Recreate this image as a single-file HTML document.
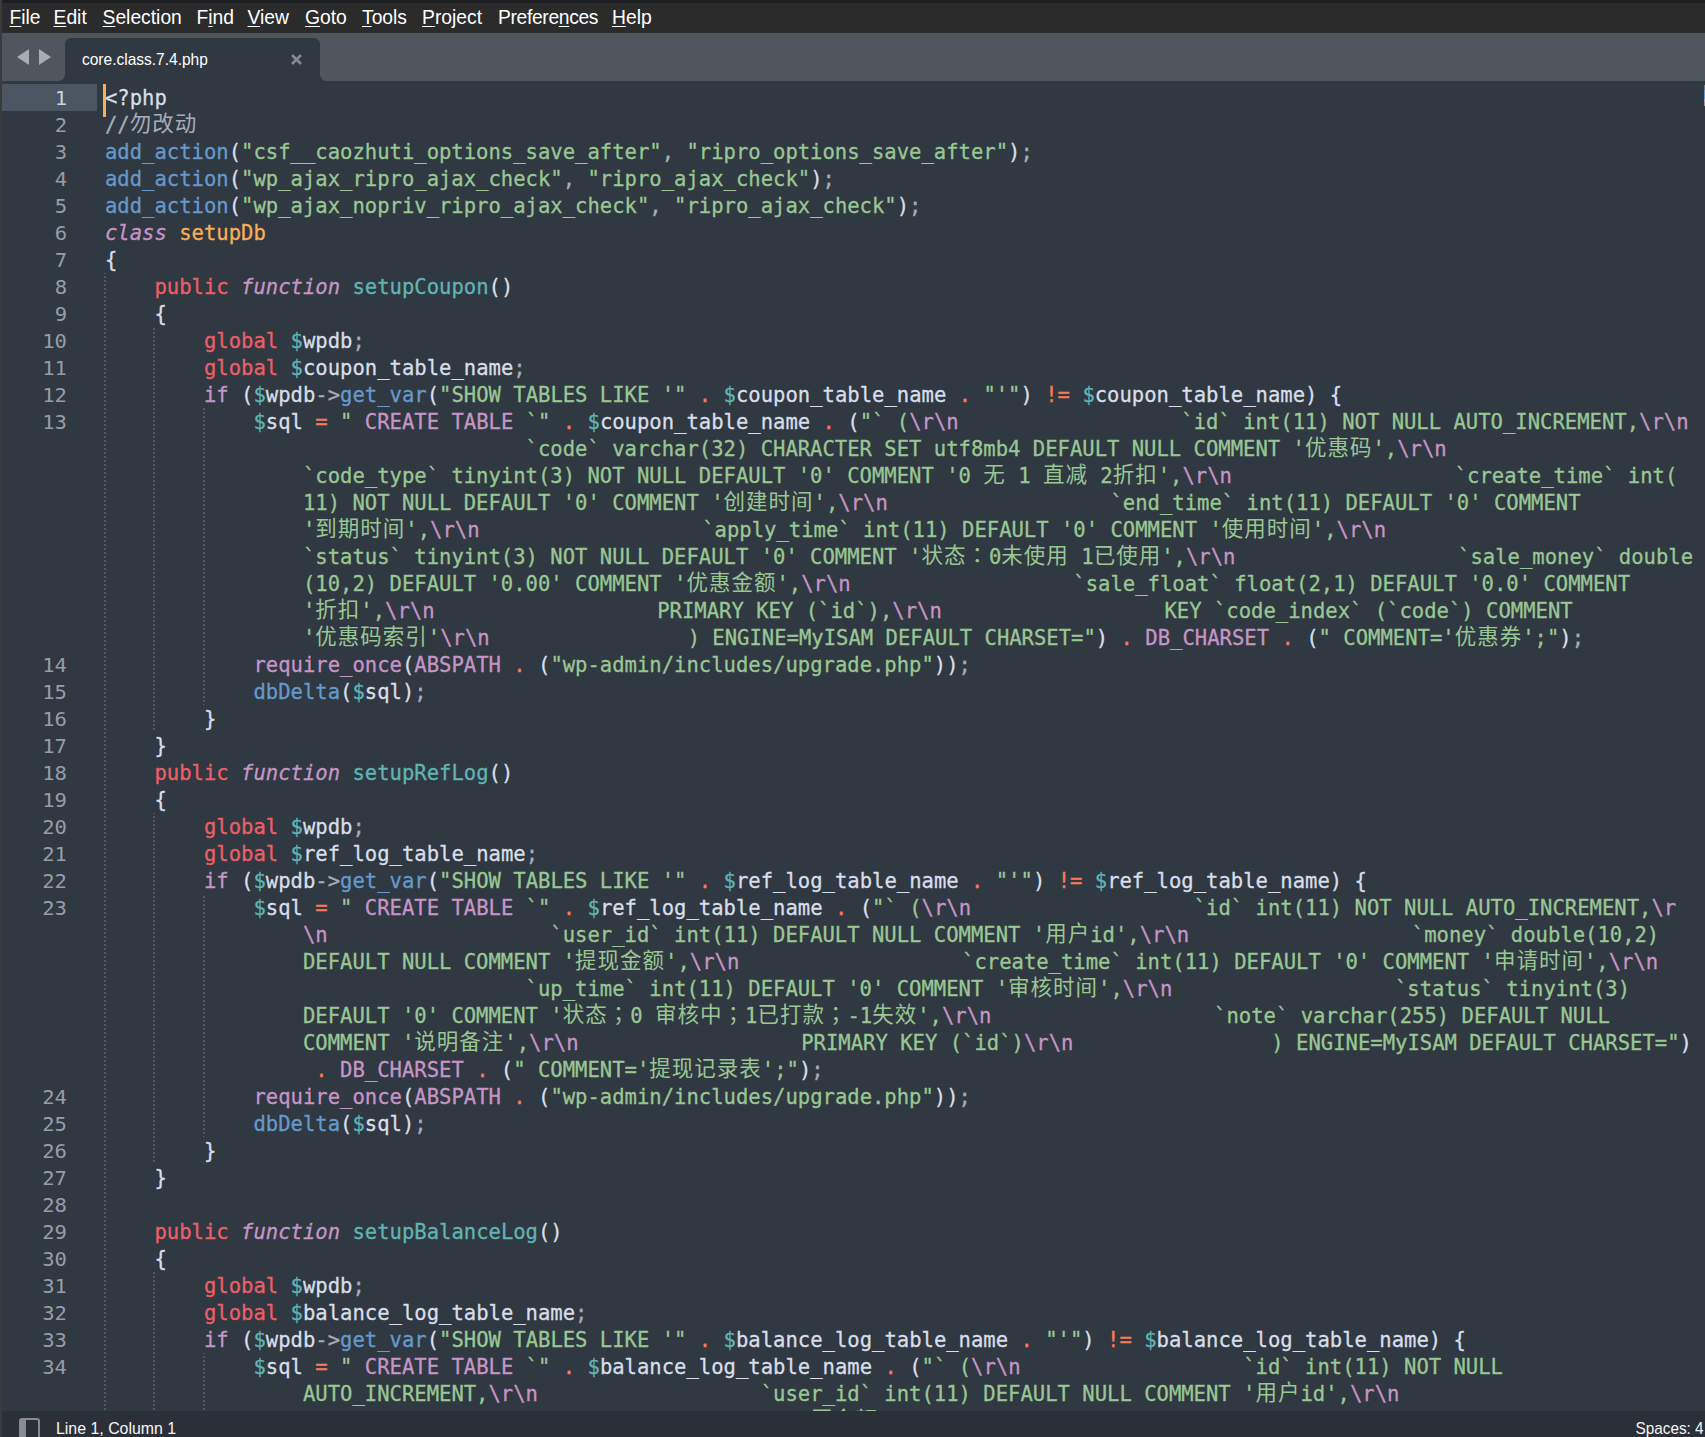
<!DOCTYPE html>
<html lang="zh"><head><meta charset="utf-8"><title>core.class.7.4.php - Sublime Text</title>
<style>
*{box-sizing:border-box}
html,body{margin:0;padding:0}
body{width:1705px;height:1437px;overflow:hidden;position:relative;background:#303841;font-family:"Liberation Sans",sans-serif}
#topstrip{position:absolute;left:0;top:0;width:1705px;height:3px;background:#1e1f23}
#menu{position:absolute;left:0;top:3px;width:1705px;height:30px;background:#2b2b2b;color:#fff;font-size:19.3px}
#menu span{position:absolute;top:3.5px;line-height:22px;white-space:nowrap}
#menu u{text-decoration:underline;text-underline-offset:1.5px;text-decoration-thickness:1px}
#tabs{position:absolute;left:0;top:33px;width:1705px;height:48px;background:#4f565e}
#tab{position:absolute;left:65px;top:4.5px;width:255px;height:43.5px;background:#303841;border-radius:6px 6px 0 0}
#tab:before,#tab:after{content:"";position:absolute;bottom:0;width:7px;height:7px}
#tab:before{left:-7px;background:radial-gradient(circle at 0 0,rgba(48,56,65,0) 6.5px,#303841 7.5px)}
#tab:after{right:-7px;background:radial-gradient(circle at 100% 0,rgba(48,56,65,0) 6.5px,#303841 7.5px)}
#tabname{position:absolute;left:16.5px;top:12px;font-size:17px;line-height:20px;color:#fff;white-space:nowrap;transform:scaleX(.912);transform-origin:0 0}
#tabx{position:absolute;left:226px;top:16px;width:11px;height:11px}
.arr{position:absolute;width:0;height:0;border-top:8px solid transparent;border-bottom:8px solid transparent}
#arl{left:17px;top:16px;border-right:12px solid #a9adb2}
#arr{left:38.5px;top:16px;border-left:12px solid #a9adb2}
#editor{position:absolute;left:0;top:81px;width:1705px;height:1330px;background:#303841;overflow:hidden}
#lefte{position:absolute;left:0;top:0;width:2px;height:1437px;background:#393b3d}
#gutterhl{position:absolute;left:2px;top:3px;width:95px;height:27px;background:#4b5662}
#caret{position:absolute;left:103px;top:3px;width:3px;height:33px;background:#f9ae58}
#gutter{position:absolute;left:0;top:4px;width:67px;color:#969dA9}
#gutter div{position:absolute;right:0;height:27px;line-height:27px;white-space:pre;transform:scaleY(.93);transform-origin:0 21px}
#gutter .cur{color:#cdd3de}
#code{position:absolute;left:105px;top:4px;color:#d8dee9}
#code,#gutter{font-family:"DejaVu Sans Mono","Liberation Mono","Noto Sans CJK SC",monospace;font-size:20.55px;letter-spacing:0.0px}
.ln{height:27px;line-height:27px;white-space:pre;-webkit-text-stroke:0.3px}
.z{font-style:normal;font-family:"Noto Sans CJK SC",sans-serif;font-size:21.5px;letter-spacing:1px;line-height:20px;-webkit-text-stroke:0;position:relative;top:-1px}
.zp{font-style:normal;font-family:"Noto Sans CJK TC","Noto Sans CJK JP","Noto Sans CJK SC",sans-serif}
.last span{color:transparent}.last .z{color:#99c794}
.ig{position:absolute;width:2px;background-image:linear-gradient(to bottom,#505862 0,#505862 2px,transparent 2px,transparent 4px);background-size:2px 4px;background-repeat:repeat-y}
#guides{position:absolute;left:0;top:3px}
.g{color:#99c794}.b{color:#6699cc}.t{color:#5fb4b4}.p{color:#c695c6}.pi{color:#c695c6;font-style:italic}
.r{color:#ec5f66}.o{color:#f97b58}.y{color:#f9ae58}.c{color:#a6acb9}
#status{position:absolute;left:0;top:1411px;width:1705px;height:26px;background:#2b3038;color:#f4f5f6;font-size:17px}
#status span{position:absolute;top:7.5px;line-height:20px;white-space:nowrap}
#sbicon{position:absolute;left:19px;top:7px;width:21px;height:24px;border:2px solid #888c91;border-radius:3px;background:linear-gradient(to right,#888c91 0,#888c91 5px,transparent 5px)}
#mini{position:absolute;left:1704px;top:4px;width:1px;height:21px;background:linear-gradient(to bottom,#777 0,#777 5px,#6699cc 5px,#6699cc 14px,#c695c6 14px,#c695c6 17px,#999 17px)}
</style></head><body>
<div id="topstrip"></div>
<div id="menu"><span style="left:9.5px"><u>F</u>ile</span><span style="left:53.5px"><u>E</u>dit</span><span style="left:102.5px"><u>S</u>election</span><span style="left:196.5px">F<u>i</u>nd</span><span style="left:247.5px"><u>V</u>iew</span><span style="left:305px"><u>G</u>oto</span><span style="left:362px"><u>T</u>ools</span><span style="left:422px"><u>P</u>roject</span><span style="left:498px"><b style="font-weight:normal;letter-spacing:-0.35px">Prefere<u>n</u>ces</b></span><span style="left:612px"><u>H</u>elp</span></div>
<div id="tabs"><div class="arr" id="arl"></div><div class="arr" id="arr"></div>
<div id="tab"><div id="tabname">core.class.7.4.php</div>
<svg id="tabx" viewBox="0 0 11 11"><path d="M1 1L10 10M10 1L1 10" stroke="#858a92" stroke-width="2.6" fill="none"/></svg></div></div>
<div id="editor">
<div id="gutterhl"></div>
<div id="guides"><div class="ig" style="left:104px;top:189px;height:1161px;background-position:0 3px"></div><div class="ig" style="left:153px;top:243px;height:405px;background-position:0 1px"></div><div class="ig" style="left:153px;top:729px;height:351px;background-position:0 3px"></div><div class="ig" style="left:153px;top:1188px;height:162px;background-position:0 0px"></div><div class="ig" style="left:203px;top:324px;height:297px;background-position:0 0px"></div><div class="ig" style="left:203px;top:810px;height:243px;background-position:0 2px"></div><div class="ig" style="left:203px;top:1269px;height:81px;background-position:0 3px"></div></div>
<div id="gutter"><div class="cur" style="top:0px">1</div><div style="top:27px">2</div><div style="top:54px">3</div><div style="top:81px">4</div><div style="top:108px">5</div><div style="top:135px">6</div><div style="top:162px">7</div><div style="top:189px">8</div><div style="top:216px">9</div><div style="top:243px">10</div><div style="top:270px">11</div><div style="top:297px">12</div><div style="top:324px">13</div><div style="top:567px">14</div><div style="top:594px">15</div><div style="top:621px">16</div><div style="top:648px">17</div><div style="top:675px">18</div><div style="top:702px">19</div><div style="top:729px">20</div><div style="top:756px">21</div><div style="top:783px">22</div><div style="top:810px">23</div><div style="top:999px">24</div><div style="top:1026px">25</div><div style="top:1053px">26</div><div style="top:1080px">27</div><div style="top:1107px">28</div><div style="top:1134px">29</div><div style="top:1161px">30</div><div style="top:1188px">31</div><div style="top:1215px">32</div><div style="top:1242px">33</div><div style="top:1269px">34</div></div>
<div id="code"><div class="ln">&lt;?php</div>
<div class="ln"><span class="c">//<i class="z">勿改动</i></span></div>
<div class="ln"><span class="b">add_action</span>(<span class="g">"csf__caozhuti_options_save_after"</span><span class="c">,</span> <span class="g">"ripro_options_save_after"</span>)<span class="c">;</span></div>
<div class="ln"><span class="b">add_action</span>(<span class="g">"wp_ajax_ripro_ajax_check"</span><span class="c">,</span> <span class="g">"ripro_ajax_check"</span>)<span class="c">;</span></div>
<div class="ln"><span class="b">add_action</span>(<span class="g">"wp_ajax_nopriv_ripro_ajax_check"</span><span class="c">,</span> <span class="g">"ripro_ajax_check"</span>)<span class="c">;</span></div>
<div class="ln"><span class="pi">class</span> <span class="y">setupDb</span></div>
<div class="ln">{</div>
<div class="ln">    <span class="r">public</span> <span class="pi">function</span> <span class="t">setupCoupon</span>()</div>
<div class="ln">    {</div>
<div class="ln">        <span class="r">global</span> <span class="t">$</span>wpdb<span class="c">;</span></div>
<div class="ln">        <span class="r">global</span> <span class="t">$</span>coupon_table_name<span class="c">;</span></div>
<div class="ln">        <span class="p">if</span> (<span class="t">$</span>wpdb<span class="c">-&gt;</span><span class="b">get_var</span>(<span class="g">"SHOW TABLES LIKE '"</span> <span class="o">.</span> <span class="t">$</span>coupon_table_name <span class="o">.</span> <span class="g">"'"</span>) <span class="o">!=</span> <span class="t">$</span>coupon_table_name) {</div>
<div class="ln">            <span class="t">$</span>sql <span class="o">=</span> <span class="g">"</span><span class="p"> CREATE TABLE </span><span class="g">`"</span> <span class="o">.</span> <span class="t">$</span>coupon_table_name <span class="o">.</span> (<span class="g">"</span><span class="g">` (</span><span class="p">\r</span><span class="p">\n</span><span class="g">                  `id` int(11) NOT NULL AUTO_INCREMENT,</span><span class="p">\r</span><span class="p">\n</span></div>
<div class="ln">                <span class="g">                  `code` varchar(32) CHARACTER SET utf8mb4 DEFAULT NULL COMMENT '<i class="z">优惠码</i>',</span><span class="p">\r</span><span class="p">\n</span></div>
<div class="ln">                <span class="g">`code_type` tinyint(3) NOT NULL DEFAULT '0' COMMENT '0 <i class="z">无</i> 1 <i class="z">直减</i> 2<i class="z">折扣</i>',</span><span class="p">\r</span><span class="p">\n</span><span class="g">                  `create_time` int(</span></div>
<div class="ln">                <span class="g">11) NOT NULL DEFAULT '0' COMMENT '<i class="z">创建时间</i>',</span><span class="p">\r</span><span class="p">\n</span><span class="g">                  `end_time` int(11) DEFAULT '0' COMMENT</span></div>
<div class="ln">                <span class="g">'<i class="z">到期时间</i>',</span><span class="p">\r</span><span class="p">\n</span><span class="g">                  `apply_time` int(11) DEFAULT '0' COMMENT '<i class="z">使用时间</i>',</span><span class="p">\r</span><span class="p">\n</span></div>
<div class="ln">                <span class="g">`status` tinyint(3) NOT NULL DEFAULT '0' COMMENT '<i class="z">状态<i class="zp" lang="zh-TW">：</i></i>0<i class="z">未使用</i> 1<i class="z">已使用</i>',</span><span class="p">\r</span><span class="p">\n</span><span class="g">                  `sale_money` double</span></div>
<div class="ln">                <span class="g">(10,2) DEFAULT '0.00' COMMENT '<i class="z">优惠金额</i>',</span><span class="p">\r</span><span class="p">\n</span><span class="g">                  `sale_float` float(2,1) DEFAULT '0.0' COMMENT</span></div>
<div class="ln">                <span class="g">'<i class="z">折扣</i>',</span><span class="p">\r</span><span class="p">\n</span><span class="g">                  PRIMARY KEY (`id`),</span><span class="p">\r</span><span class="p">\n</span><span class="g">                  KEY `code_index` (`code`) COMMENT</span></div>
<div class="ln">                <span class="g">'<i class="z">优惠码索引</i>'</span><span class="p">\r</span><span class="p">\n</span><span class="g">                ) ENGINE=MyISAM DEFAULT CHARSET="</span>) <span class="o">.</span> <span class="p">DB_CHARSET</span> <span class="o">.</span> (<span class="g">" COMMENT='<i class="z">优惠券</i>';"</span>)<span class="c">;</span></div>
<div class="ln">            <span class="p">require_once</span>(<span class="p">ABSPATH</span> <span class="o">.</span> (<span class="g">"wp-admin/includes/upgrade.php"</span>))<span class="c">;</span></div>
<div class="ln">            <span class="b">dbDelta</span>(<span class="t">$</span>sql)<span class="c">;</span></div>
<div class="ln">        }</div>
<div class="ln">    }</div>
<div class="ln">    <span class="r">public</span> <span class="pi">function</span> <span class="t">setupRefLog</span>()</div>
<div class="ln">    {</div>
<div class="ln">        <span class="r">global</span> <span class="t">$</span>wpdb<span class="c">;</span></div>
<div class="ln">        <span class="r">global</span> <span class="t">$</span>ref_log_table_name<span class="c">;</span></div>
<div class="ln">        <span class="p">if</span> (<span class="t">$</span>wpdb<span class="c">-&gt;</span><span class="b">get_var</span>(<span class="g">"SHOW TABLES LIKE '"</span> <span class="o">.</span> <span class="t">$</span>ref_log_table_name <span class="o">.</span> <span class="g">"'"</span>) <span class="o">!=</span> <span class="t">$</span>ref_log_table_name) {</div>
<div class="ln">            <span class="t">$</span>sql <span class="o">=</span> <span class="g">"</span><span class="p"> CREATE TABLE </span><span class="g">`"</span> <span class="o">.</span> <span class="t">$</span>ref_log_table_name <span class="o">.</span> (<span class="g">"</span><span class="g">` (</span><span class="p">\r</span><span class="p">\n</span><span class="g">                  `id` int(11) NOT NULL AUTO_INCREMENT,</span><span class="p">\r</span></div>
<div class="ln">                <span class="p">\n</span><span class="g">                  `user_id` int(11) DEFAULT NULL COMMENT '<i class="z">用户</i>id',</span><span class="p">\r</span><span class="p">\n</span><span class="g">                  `money` double(10,2)</span></div>
<div class="ln">                <span class="g">DEFAULT NULL COMMENT '<i class="z">提现金额</i>',</span><span class="p">\r</span><span class="p">\n</span><span class="g">                  `create_time` int(11) DEFAULT '0' COMMENT '<i class="z">申请时间</i>',</span><span class="p">\r</span><span class="p">\n</span></div>
<div class="ln">                <span class="g">                  `up_time` int(11) DEFAULT '0' COMMENT '<i class="z">审核时间</i>',</span><span class="p">\r</span><span class="p">\n</span><span class="g">                  `status` tinyint(3)</span></div>
<div class="ln">                <span class="g">DEFAULT '0' COMMENT '<i class="z">状态<i class="zp" lang="zh-TW">；</i></i>0 <i class="z">审核中<i class="zp" lang="zh-TW">；</i></i>1<i class="z">已打款<i class="zp" lang="zh-TW">；</i></i>-1<i class="z">失效</i>',</span><span class="p">\r</span><span class="p">\n</span><span class="g">                  `note` varchar(255) DEFAULT NULL</span></div>
<div class="ln">                <span class="g">COMMENT '<i class="z">说明备注</i>',</span><span class="p">\r</span><span class="p">\n</span><span class="g">                  PRIMARY KEY (`id`)</span><span class="p">\r</span><span class="p">\n</span><span class="g">                ) ENGINE=MyISAM DEFAULT CHARSET="</span>)</div>
<div class="ln">                 <span class="o">.</span> <span class="p">DB_CHARSET</span> <span class="o">.</span> (<span class="g">" COMMENT='<i class="z">提现记录表</i>';"</span>)<span class="c">;</span></div>
<div class="ln">            <span class="p">require_once</span>(<span class="p">ABSPATH</span> <span class="o">.</span> (<span class="g">"wp-admin/includes/upgrade.php"</span>))<span class="c">;</span></div>
<div class="ln">            <span class="b">dbDelta</span>(<span class="t">$</span>sql)<span class="c">;</span></div>
<div class="ln">        }</div>
<div class="ln">    }</div>
<div class="ln"></div>
<div class="ln">    <span class="r">public</span> <span class="pi">function</span> <span class="t">setupBalanceLog</span>()</div>
<div class="ln">    {</div>
<div class="ln">        <span class="r">global</span> <span class="t">$</span>wpdb<span class="c">;</span></div>
<div class="ln">        <span class="r">global</span> <span class="t">$</span>balance_log_table_name<span class="c">;</span></div>
<div class="ln">        <span class="p">if</span> (<span class="t">$</span>wpdb<span class="c">-&gt;</span><span class="b">get_var</span>(<span class="g">"SHOW TABLES LIKE '"</span> <span class="o">.</span> <span class="t">$</span>balance_log_table_name <span class="o">.</span> <span class="g">"'"</span>) <span class="o">!=</span> <span class="t">$</span>balance_log_table_name) {</div>
<div class="ln">            <span class="t">$</span>sql <span class="o">=</span> <span class="g">"</span><span class="p"> CREATE TABLE </span><span class="g">`"</span> <span class="o">.</span> <span class="t">$</span>balance_log_table_name <span class="o">.</span> (<span class="g">"</span><span class="g">` (</span><span class="p">\r</span><span class="p">\n</span><span class="g">                  `id` int(11) NOT NULL</span></div>
<div class="ln">                <span class="g">AUTO_INCREMENT,</span><span class="p">\r</span><span class="p">\n</span><span class="g">                  `user_id` int(11) DEFAULT NULL COMMENT '<i class="z">用户</i>id',</span><span class="p">\r</span><span class="p">\n</span></div>
<div class="ln last">                <span class="g">`old` double(10,2) DEFAULT NULL COMMENT '<i class="z">原金额</i>',</span><span class="p">\r</span><span class="p">\n</span><span class="g">                  `apply` double(10,2)</span></div></div>
<div id="caret"></div>
<div id="mini"></div>
</div>
<div id="status"><div id="sbicon"></div><span style="left:56px;transform:scaleX(.935);transform-origin:0 0">Line 1, Column 1</span><span style="right:1px;transform:scaleX(.9);transform-origin:right top">Spaces: 4</span></div>
<div id="lefte"></div>
</body></html>
